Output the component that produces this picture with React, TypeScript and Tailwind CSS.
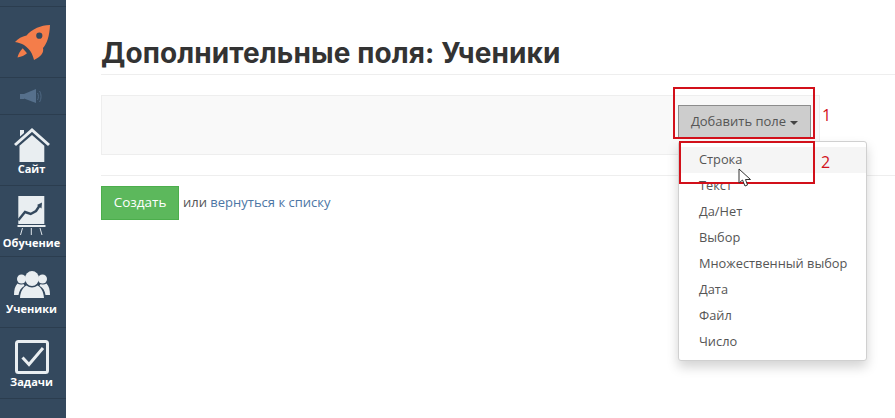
import React from 'react';

const menuItems = ['Строка', 'Текст', 'Да/Нет', 'Выбор', 'Множественный выбор', 'Дата', 'Файл', 'Число'];

const RocketIcon = () => (
  <svg width="36" height="36" viewBox="0 0 36 36">
    <path fill="#f47d4a" fillRule="evenodd" d="M35 0 C30 0.3 26 1 22 2.8 C17.5 4.8 14 7.5 11.5 10.5 C7 11.5 3 13.5 0 17 C3.5 17.5 6.5 18.5 9 20 C12 22 15 25 16.5 28 C17.5 30.5 18.5 32.5 19 35 C22 33.5 25 31.5 26.5 29.5 C28 27.5 28.5 25.5 28 23 C32 18.5 34.5 11 35 0 Z M24.3 7.6 A3.1 3.1 0 1 0 24.3 13.8 A3.1 3.1 0 1 0 24.3 7.6 Z" />
    <path fill="#f47d4a" d="M7.7 23.3 L12 28.3 C9.5 30.5 6.5 31.8 2.5 32.5 C3 29.5 5 26 7.7 23.3 Z" />
  </svg>
);

const SpeakerIcon = () => (
  <svg width="22" height="14" viewBox="0 0 22 14" fill="none">
    <rect x="0" y="5" width="4" height="5" fill="#56708c" />
    <path d="M4 5 L16 0 V14 L4 9.5 Z" fill="#56708c" />
    <path d="M17.5 4 C18.7 6 18.7 9 17.5 11 M19.5 2 C21.5 5 21.5 10 19.5 13" stroke="#56708c" strokeWidth="0.8" />
  </svg>
);

const HomeIcon = () => (
  <svg width="36" height="35" viewBox="0 0 36 35" fill="none">
    <path d="M6 3 H10 V6 L6 9.5 Z" fill="#e9eef1" />
    <path d="M1 18 L18 3 L35 18" stroke="#e9eef1" strokeWidth="3" />
    <path d="M18 8 L30.3 18.8 V35 H5.5 V18.8 Z" fill="#e9eef1" />
  </svg>
);

const ChartIcon = () => (
  <svg width="29" height="40" viewBox="0 0 29 40" fill="none">
    <path d="M1.3 0 H27.3 V28 H1.3 Z" fill="#e9eef1" />
    <path d="M1.3 24.3 L8 16 L13.7 18 L19 15 L23 9" stroke="#34495e" strokeWidth="2.4" />
    <path d="M25 6.5 L24.5 12.5 L20 9 Z" fill="#34495e" />
    <path d="M0.5 30 H28.5" stroke="#e9eef1" strokeWidth="2" />
    <path d="M5.5 32 L3.5 39 M14.3 32 V39 M23 32 L25 39" stroke="#dfe5ea" strokeWidth="1" />
  </svg>
);

const UsersIcon = () => (
  <svg width="36" height="27" viewBox="0 0 36 27" fill="#e9eef1">
    <ellipse cx="18" cy="7.5" rx="7" ry="7.5" />
    <circle cx="7.5" cy="8" r="4.5" />
    <circle cx="28.5" cy="8" r="4.5" />
    <path d="M12.5 14.5 C14 15.8 16 16.5 18 16.5 C20 16.5 22 15.8 23.5 14.5 C27 16.5 29.5 20 30 27 H6 C6.5 20 9 16.5 12.5 14.5 Z" />
    <path d="M3.5 12.5 C5 13.5 7 14 9.5 13 C9.8 13.8 10 14.2 10.5 14.7 C7 16.5 5 20 4.5 24 H0 C0 19 1 15 3.5 12.5 Z" />
    <path d="M32.5 12.5 C31 13.5 29 14 26.5 13 C26.2 13.8 26 14.2 25.5 14.7 C29 16.5 31 20 31.5 24 H36 C36 19 35 15 32.5 12.5 Z" />
  </svg>
);

const TaskIcon = () => (
  <svg width="34" height="34" viewBox="0 0 34 34" fill="none">
    <rect x="1.5" y="1.5" width="31" height="31" rx="2" stroke="#e9eef1" strokeWidth="3" />
    <path d="M7.5 17.5 L14 24.5 L28 8" stroke="#e9eef1" strokeWidth="3" />
  </svg>
);

const SideItem = ({ icon, label, className }: { icon: React.ReactNode; label: string; className: string }) => (
  <div className={`flex h-[71px] flex-col items-center border-b border-[#2b3d4f] pr-[3px] ${className}`}>
    {icon}
    <span className="text-[11px] leading-[13px] font-bold whitespace-nowrap text-white">{label}</span>
  </div>
);

export default function App() {
  return (
    <div className="relative flex h-[418px] w-[895px] overflow-hidden bg-white font-['Open_Sans',sans-serif] text-[13px] text-[#555]">
      <aside className="w-[66px] shrink-0 bg-[#34495e]">
        <div className="h-[7px] border-b border-[#2b3d4f]" />
        <div className="flex h-[71px] items-start justify-center border-b border-[#2b3d4f] pt-[18px] pr-[1px]">
          <RocketIcon />
        </div>
        <div className="flex h-[37px] items-center justify-center border-b border-[#2b3d4f] pr-[5px]">
          <SpeakerIcon />
        </div>
        <SideItem icon={<HomeIcon />} label="Сайт" className="pt-[12px]" />
        <SideItem icon={<ChartIcon />} label="Обучение" className="pt-[10px]" />
        <SideItem icon={<UsersIcon />} label="Ученики" className="gap-[4px] pt-[14px]" />
        <SideItem icon={<TaskIcon />} label="Задачи" className="gap-[1px] pt-[12px]" />
      </aside>

      <main className="relative min-w-0 flex-1 pl-[35px]">
        <h1 className="h-[75px] border-b border-[#eeeeee] pt-[33px] font-['Inter',sans-serif] text-[28px] leading-[40px] font-bold tracking-[0.1px] text-[#333]">
          Дополнительные поля: Ученики
        </h1>

        <div className="mt-[20px] flex h-[60px] w-[719px] justify-end border border-[#eeeeee] bg-[#f9f9f9] pt-[9px] pr-[8px]">
          <button className="flex h-[34px] w-[133px] items-center justify-center gap-[4px] border border-[#8c8c8c] bg-[#cdcdcd] text-[13px] text-[#555]">
            Добавить поле
            <span className="mt-[2px] border-x-[4px] border-t-[4px] border-x-transparent border-t-[#444]" />
          </button>
        </div>

        <div className="mt-[20px] border-t border-[#eeeeee] pt-[10px]">
          <div className="flex items-center">
            <button className="h-[34px] w-[78px] border border-[#4cae4c] bg-[#5cb85c] pb-[1px] text-[13.5px] text-white">Создать</button>
            <span className="ml-[4px] text-[13px]">
              или <a className="text-[#4c76a5]">вернуться к списку</a>
            </span>
          </div>
        </div>

        {/* opened dropdown */}
        <ul className="absolute top-[141px] left-[612px] w-[189px] rounded-[3px] border border-[#d0d0d0] bg-white py-[5px] shadow-[0_6px_12px_rgba(0,0,0,0.175)]">
          {menuItems.map((item, i) => (
            <li
              key={item}
              className={`h-[26px] pl-[20px] text-[12.8px] leading-[24px] whitespace-nowrap text-[#555] ${i === 0 ? 'bg-[#f5f5f5]' : ''}`}
            >
              {item}
            </li>
          ))}
        </ul>

        {/* annotations drawn over the screenshot */}
        <div className="absolute top-[87px] left-[607px] h-[52px] w-[142px] border-2 border-[#d2101a]" />
        <div className="absolute top-[141px] left-[613px] h-[43px] w-[136px] border-2 border-[#d2101a]" />
        <span className="absolute top-[104px] left-[756px] text-[16px] leading-[22px] text-[#d2101a]">1</span>
        <span className="absolute top-[151px] left-[755px] text-[16px] leading-[22px] text-[#d2101a]">2</span>

        {/* mouse cursor */}
        <svg className="absolute top-[168px] left-[672px]" width="14" height="20" viewBox="0 0 14 20">
          <path d="M1 1 V15 L4.5 12 L7 18 L9.5 17 L7.5 11.5 L12.5 11.5 Z" fill="#fff" stroke="#333" strokeWidth="1" />
        </svg>
      </main>
    </div>
  );
}
